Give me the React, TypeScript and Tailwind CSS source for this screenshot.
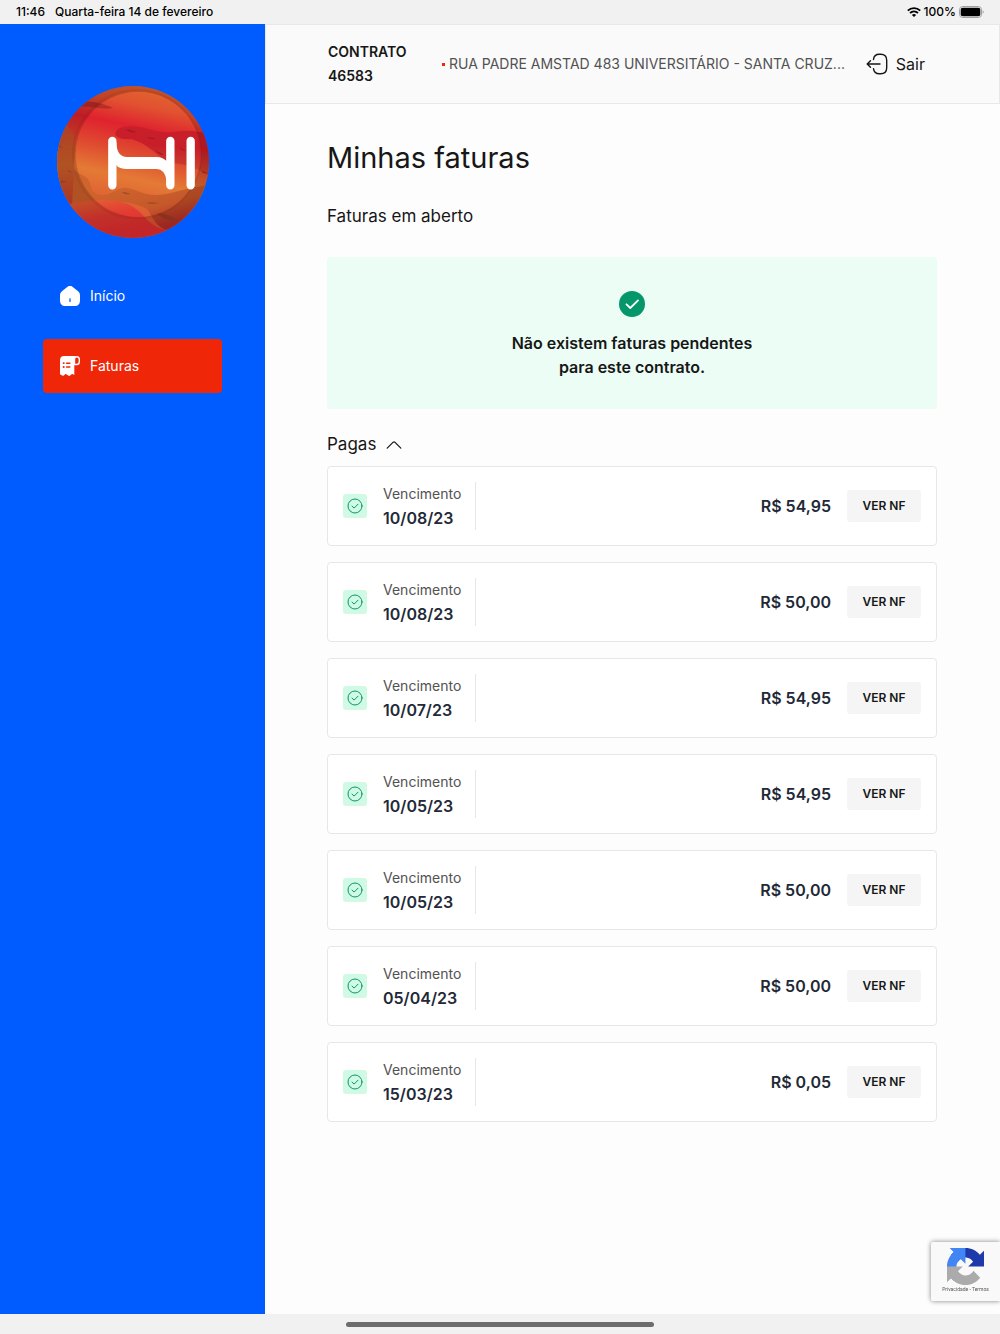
import React from "react";

const invoices = [
  { due: "10/08/23", amount: "R$ 54,95" },
  { due: "10/08/23", amount: "R$ 50,00" },
  { due: "10/07/23", amount: "R$ 54,95" },
  { due: "10/05/23", amount: "R$ 54,95" },
  { due: "10/05/23", amount: "R$ 50,00" },
  { due: "05/04/23", amount: "R$ 50,00" },
  { due: "15/03/23", amount: "R$ 0,05" },
];

function StatusBar() {
  return (
    <div className="flex h-6 shrink-0 items-center justify-between bg-[#f1f1f1] pl-4 pr-4 text-xs font-medium text-black">
      <div className="flex gap-2.5">
        <span>11:46</span>
        <span>Quarta-feira 14 de fevereiro</span>
      </div>
      <div className="flex items-center gap-[3px]">
        <svg width="14" height="10" viewBox="0 0 14 10" fill="none" stroke="#000" aria-hidden="true">
          <path d="M.8 3.6a9 9 0 0 1 12.4 0" strokeWidth="1.9" />
          <path d="M3 6a6 6 0 0 1 8 0" strokeWidth="1.8" />
          <path d="M7 9.9 4.9 7.9a3.1 3.1 0 0 1 4.2 0z" fill="#000" stroke="none" />
        </svg>
        <span>100%</span>
        <svg width="25" height="12" viewBox="0 0 25 12" aria-hidden="true">
          <rect x=".5" y=".5" width="22" height="11" rx="3.2" fill="none" stroke="#a0a0a0" />
          <rect x="1.7" y="1.7" width="19.6" height="8.6" rx="2" fill="#000" />
          <path d="M23.6 4.2v3.6a2 2 0 0 0 0-3.6" fill="#a0a0a0" />
        </svg>
      </div>
    </div>
  );
}

function Logo() {
  return (
    <svg className="h-38 w-38" viewBox="35 33 456 456" role="img" aria-label="HI">
      <defs>
        <linearGradient id="surface" gradientUnits="userSpaceOnUse" x1="300" y1="40" x2="215" y2="430">
          <stop offset="0" stopColor="#e1632f" />
          <stop offset=".13" stopColor="#e15230" />
          <stop offset=".3" stopColor="#df222f" />
          <stop offset=".5" stopColor="#df4d30" />
          <stop offset=".68" stopColor="#e47a35" />
          <stop offset="1" stopColor="#dc5232" />
        </linearGradient>
        <linearGradient id="ridge" gradientUnits="userSpaceOnUse" x1="360" y1="150" x2="350" y2="275">
          <stop offset="0" stopColor="#c81f2a" />
          <stop offset=".5" stopColor="#c81e29" />
          <stop offset="1" stopColor="#ca412d" />
        </linearGradient>
        <linearGradient id="valley" gradientUnits="userSpaceOnUse" x1="250" y1="320" x2="290" y2="470">
          <stop offset="0" stopColor="#ce652d" />
          <stop offset=".6" stopColor="#c6582a" />
          <stop offset="1" stopColor="#b3302a" />
        </linearGradient>
        <linearGradient id="west" gradientUnits="userSpaceOnUse" x1="60" y1="140" x2="75" y2="400">
          <stop offset="0" stopColor="#cd4a2c" />
          <stop offset=".5" stopColor="#cd652b" />
          <stop offset="1" stopColor="#c63e2b" />
        </linearGradient>
        <linearGradient id="south" gradientUnits="userSpaceOnUse" x1="180" y1="370" x2="200" y2="470">
          <stop offset="0" stopColor="#e35c33" />
          <stop offset=".5" stopColor="#e23c33" />
          <stop offset="1" stopColor="#e13032" />
        </linearGradient>
        <clipPath id="planet"><circle cx="263" cy="261" r="228" /></clipPath>
      </defs>
      <g clipPath="url(#planet)">
        <rect x="35" y="33" width="456" height="456" fill="url(#surface)" />
        <path d="M35 135C65 140 88 175 90 210C93 245 80 265 86 284C105 305 132 300 135 333C142 365 175 370 205 350V400L35 410Z" fill="url(#west)" />
        <path d="M86 284C105 305 132 300 135 333C142 365 175 370 205 350C248 320 268 355 326 360C380 361 425 335 491 330V470H375C320 455 320 410 300 400C260 378 190 370 80 390Z" fill="url(#valley)" />
        <path d="M35 396C110 378 180 366 233 382C300 402 300 460 370 465L390 489H35Z" fill="url(#south)" />
        <path d="M210 174C214 150 265 151 295 158C330 167 350 174 385 171C430 162 455 170 491 175V300C440 270 400 265 365 264C320 225 300 205 260 193C230 193 208 189 210 174Z" fill="url(#ridge)" />
        <path d="M105 82C135 75 170 85 203 99C170 107 130 90 95 96Z" fill="#ad2a27" opacity=".8" />
        <path d="M334 416C355 413 380 422 400 438C375 440 350 430 334 416Z" fill="#9f3d25" />
        <path d="M242 163C252 173 264 174 274 171C262 168 253 163 242 163ZM304 187C316 195 326 192 332 190C322 189 314 187 304 187ZM327 222C335 232 345 230 355 239C345 242 335 232 327 222ZM400 216L424 228L410 225ZM468 288L488 296L474 294Z" fill="#a71922" />
        <path d="M230 351C240 361 248 357 256 357C247 354 242 350 230 351ZM304 383C320 391 330 385 342 384C330 382 318 381 304 383ZM66 284L84 293L72 291ZM40 211L54 218L40 216ZM45 317L68 319L48 323Z" fill="#a34f25" />
        <path fillRule="evenodd" d="M35 33H491V489H35ZM91 238A188 188 0 0 0 467 238A188 188 0 0 0 91 238Z" fill="#300000" opacity=".18" />
        <circle cx="275" cy="238" r="192" fill="none" stroke="#7b1711" strokeWidth="6" opacity=".12" />
      </g>
      <path d="M201 198V331M375 198V331M436 198V331" strokeWidth="25" fill="none" stroke="#fff" strokeLinecap="round" />
      <path d="M213 200C213 230 225 246 245 246H333C348 246 357 252 363 257L376 275V331H363V320C363 296 350 282 333 282H245C230 282 219 279 213 271L203 250Z" fill="#fff" />
    </svg>
  );
}

function HomeIcon() {
  return (
    <svg className="h-5 w-5 shrink-0" viewBox="0 0 20 20" aria-hidden="true">
      <path d="M7.3.9a4.4 4.4 0 0 1 5.4 0l5.1 4C19.4 6.2 20 7.6 20 9.5V14c0 4-1.8 6-5.5 6h-9C1.800 20 0 18 0 14V9.500C0 7.600.6 6.200 2.200 4.900z" fill="#fff" />
      <path d="M10 12.800v2.800" stroke="#005cff" strokeWidth="1.300" strokeLinecap="round" />
    </svg>
  );
}

function InvoiceIcon() {
  return (
    <svg className="h-5 w-5 shrink-0" viewBox="0 0 20 20" aria-hidden="true">
      <path d="M0 4.200C0 1.500 1.500 0 4 0h13c-1.800 0-2.700 1-2.700 3v16l-1.400-.8c-.6-.4-1-.3-1.500.2l-1.300 1.200c-.6.5-1.200.5-1.800 0L6.500 18.400c-.5-.5-1-.5-1.500 0l-1.300 1c-.5.4-1 .4-1.500.1L0 18.200z" fill="#fff" />
      <path d="M14.500 8.500V3c0-1.500 1-2.300 2.300-2.300S19.300 2 19.300 3.500v2.200c0 1.700-1 2.800-2.700 2.800z" fill="none" stroke="#fff" strokeWidth="1.400" />
      <path d="M6.600 7.200h3.200M6.600 11h3.200" stroke="#ef2708" strokeWidth="1.500" strokeLinecap="round" />
      <path d="M3.600 7.200h.2M3.600 11h.2" stroke="#ef2708" strokeWidth="1.800" strokeLinecap="round" />
    </svg>
  );
}

function Sidebar() {
  return (
    <aside className="w-[265px] shrink-0 bg-[#005cff] px-[43px] pt-[62px] text-sm text-white">
      <div className="flex justify-center">
        <Logo />
      </div>
      <nav className="mt-[31px] flex flex-col gap-4">
        <a href="#inicio" className="flex h-[54px] items-center gap-2.5 rounded px-[17px]">
          <HomeIcon />
          Início
        </a>
        <a href="#faturas" aria-current="page" className="flex h-[54px] items-center gap-2.5 rounded bg-[#ef2708] px-[17px]">
          <InvoiceIcon />
          Faturas
        </a>
      </nav>
    </aside>
  );
}

function Header() {
  return (
    <header className="flex h-20 items-center border border-[#e8e8e8] bg-[#fafafa] pl-[62px] pr-[74px]">
      <div className="w-[114px] shrink-0 text-sm leading-6 font-semibold text-[#171717]">
        CONTRATO
        <br />
        46583
      </div>
      <div className="flex min-w-0 flex-1 items-center gap-1 text-sm text-[#525252]">
        <span className="h-[3px] w-[3px] shrink-0 bg-[#ef2708]" />
        <span className="truncate">RUA PADRE AMSTAD 483 UNIVERSITÁRIO - SANTA CRUZ...</span>
      </div>
      <button type="button" className="ml-4 flex shrink-0 items-center gap-2 text-base text-[#171717]">
        <svg className="h-[22px] w-[22px]" viewBox="0 0 22 22" fill="none" stroke="#171717" strokeWidth="1.4" strokeLinecap="round" strokeLinejoin="round" aria-hidden="true">
          <path d="M7.500 6.500C7.800 3 9.600 1.300 13.400 1.300h1.200c4.400 0 6.100 1.800 6.100 6v7.400c0 4.200-1.700 6-6.100 6h-1.200c-3.800 0-5.600-1.600-5.900-5.100M14 11H1.600M4.500 7.700 1.200 11l3.300 3.300" />
        </svg>
        Sair
      </button>
    </header>
  );
}

function InvoiceCard({ due, amount }: { due: string; amount: string }) {
  return (
    <li className="flex h-20 items-center rounded border border-[#e5e7eb] bg-white px-[15px]">
      <span className="flex h-6 w-6 items-center justify-center rounded-[3px] bg-[#d1fae5]">
        <svg className="h-4 w-4" viewBox="0 0 16 16" fill="none" stroke="#059669" strokeLinecap="round" strokeLinejoin="round" aria-hidden="true">
          <circle cx="8" cy="8" r="7" />
          <path d="m5 8.100 2.100 2 3.900-3.900" />
        </svg>
      </span>
      <div className="ml-4 border-r border-[#e5e7eb] pr-3.5">
        <div className="text-sm leading-6 text-[#525252]">Vencimento</div>
        <div className="text-base leading-6 font-semibold text-[#1f2937]">{due}</div>
      </div>
      <span className="ml-auto text-base font-semibold text-[#1f2937]">{amount}</span>
      <button type="button" className="ml-4 h-8 w-[74px] rounded-[3px] bg-[#f5f5f5] text-xs font-semibold text-[#171717]">
        VER NF
      </button>
    </li>
  );
}

function RecaptchaBadge() {
  return (
    <div className="fixed right-0 bottom-[33px] flex h-[59px] w-[69px] flex-col items-center rounded-l-xs bg-[#f9f9f9] pt-1.5 shadow-[0_0_5px_#808080]">
      <svg className="h-[37px] w-[37px]" viewBox="0 0 64 64" aria-hidden="true">
        <path fill="#1c3aa9" d="M64 31.955l-.033-1.370V4.687l-7.160 7.160C50.948 4.674 42.033.093 32.050.093c-10.400 0-19.622 4.960-25.458 12.640l11.736 11.860a15.550 15.550 0 0 1 4.754-5.334c2.050-1.600 4.952-2.906 8.968-2.906.485 0 .860.057 1.135.163 4.976.393 9.288 3.140 11.828 7.124l-8.307 8.307 27.295-.004" />
        <path fill="#4285f4" d="M31.862.094l-1.370.033H4.594l7.160 7.160C4.580 13.147 0 22.060 0 32.046c0 10.400 4.960 19.622 12.640 25.458L24.500 45.768a15.550 15.550 0 0 1-5.334-4.754c-1.600-2.050-2.906-4.952-2.906-8.968 0-.485.057-.860.163-1.135.393-4.976 3.140-9.288 7.124-11.828l8.307 8.307-.004-27.295" />
        <path fill="#ababab" d="M.001 32.045l.033 1.370v25.898l7.160-7.160c5.860 7.173 14.774 11.754 24.760 11.754 10.400 0 19.622-4.960 25.458-12.640l-11.736-11.860a15.550 15.550 0 0 1-4.754 5.334c-2.050 1.600-4.952 2.906-8.968 2.906-.485 0-.860-.057-1.135-.163-4.976-.393-9.288-3.140-11.828-7.124l8.307-8.307-27.295.004" />
      </svg>
      <div className="mt-px font-[Roboto,sans-serif] text-[5px] leading-[6px] whitespace-nowrap text-[#555]">
        <a href="#privacidade">Privacidade</a> - <a href="#termos">Termos</a>
      </div>
    </div>
  );
}

export default function App() {
  return (
    <div className="flex min-h-screen flex-col bg-[#fdfdfd] font-[Inter,sans-serif]">
      <StatusBar />
      <div className="flex flex-1">
        <Sidebar />
        <div className="min-w-0 flex-1">
          <Header />
          <main className="pl-[62px] pr-[63px] pt-9 pb-8 text-[#171717]">
            <h1 className="text-[29px] leading-9">Minhas faturas</h1>
            <h2 className="mt-[26px] text-[17px] leading-7">Faturas em aberto</h2>
            <section className="mt-[27px] flex h-[152px] flex-col items-center rounded bg-[#ecfdf5] pt-[34px]">
              <svg className="h-[26px] w-[26px]" viewBox="0 0 26 26" fill="none" aria-hidden="true">
                <circle cx="13" cy="13" r="13" fill="#059669" />
                <path d="m7.500 13.300 3.800 3.700L19 9.400" stroke="#fff" strokeWidth="1.800" strokeLinecap="round" strokeLinejoin="round" />
              </svg>
              <p className="mt-3.5 text-center text-base leading-6 font-semibold">
                Não existem faturas pendentes
                <br />
                para este contrato.
              </p>
            </section>
            <button type="button" aria-expanded="true" className="mt-5 flex h-8 items-center gap-2.5 text-[17px]">
              Pagas
              <svg className="h-2 w-4" viewBox="0 0 16 8" fill="none" stroke="#171717" strokeWidth="1.200" strokeLinecap="round" strokeLinejoin="round" aria-hidden="true">
                <path d="m1.200 7.200 6-6q.8-.7 1.600 0l6 6" />
              </svg>
            </button>
            <ul className="mt-[5px] flex flex-col gap-4">
              {invoices.map((invoice, index) => (
                <InvoiceCard key={index} {...invoice} />
              ))}
            </ul>
          </main>
        </div>
      </div>
      <div className="flex h-5 shrink-0 items-center justify-center bg-[#f1f1f1]">
        <div className="h-[5px] w-[308px] rounded-full bg-[#6d6d6d]" />
      </div>
      <RecaptchaBadge />
    </div>
  );
}
